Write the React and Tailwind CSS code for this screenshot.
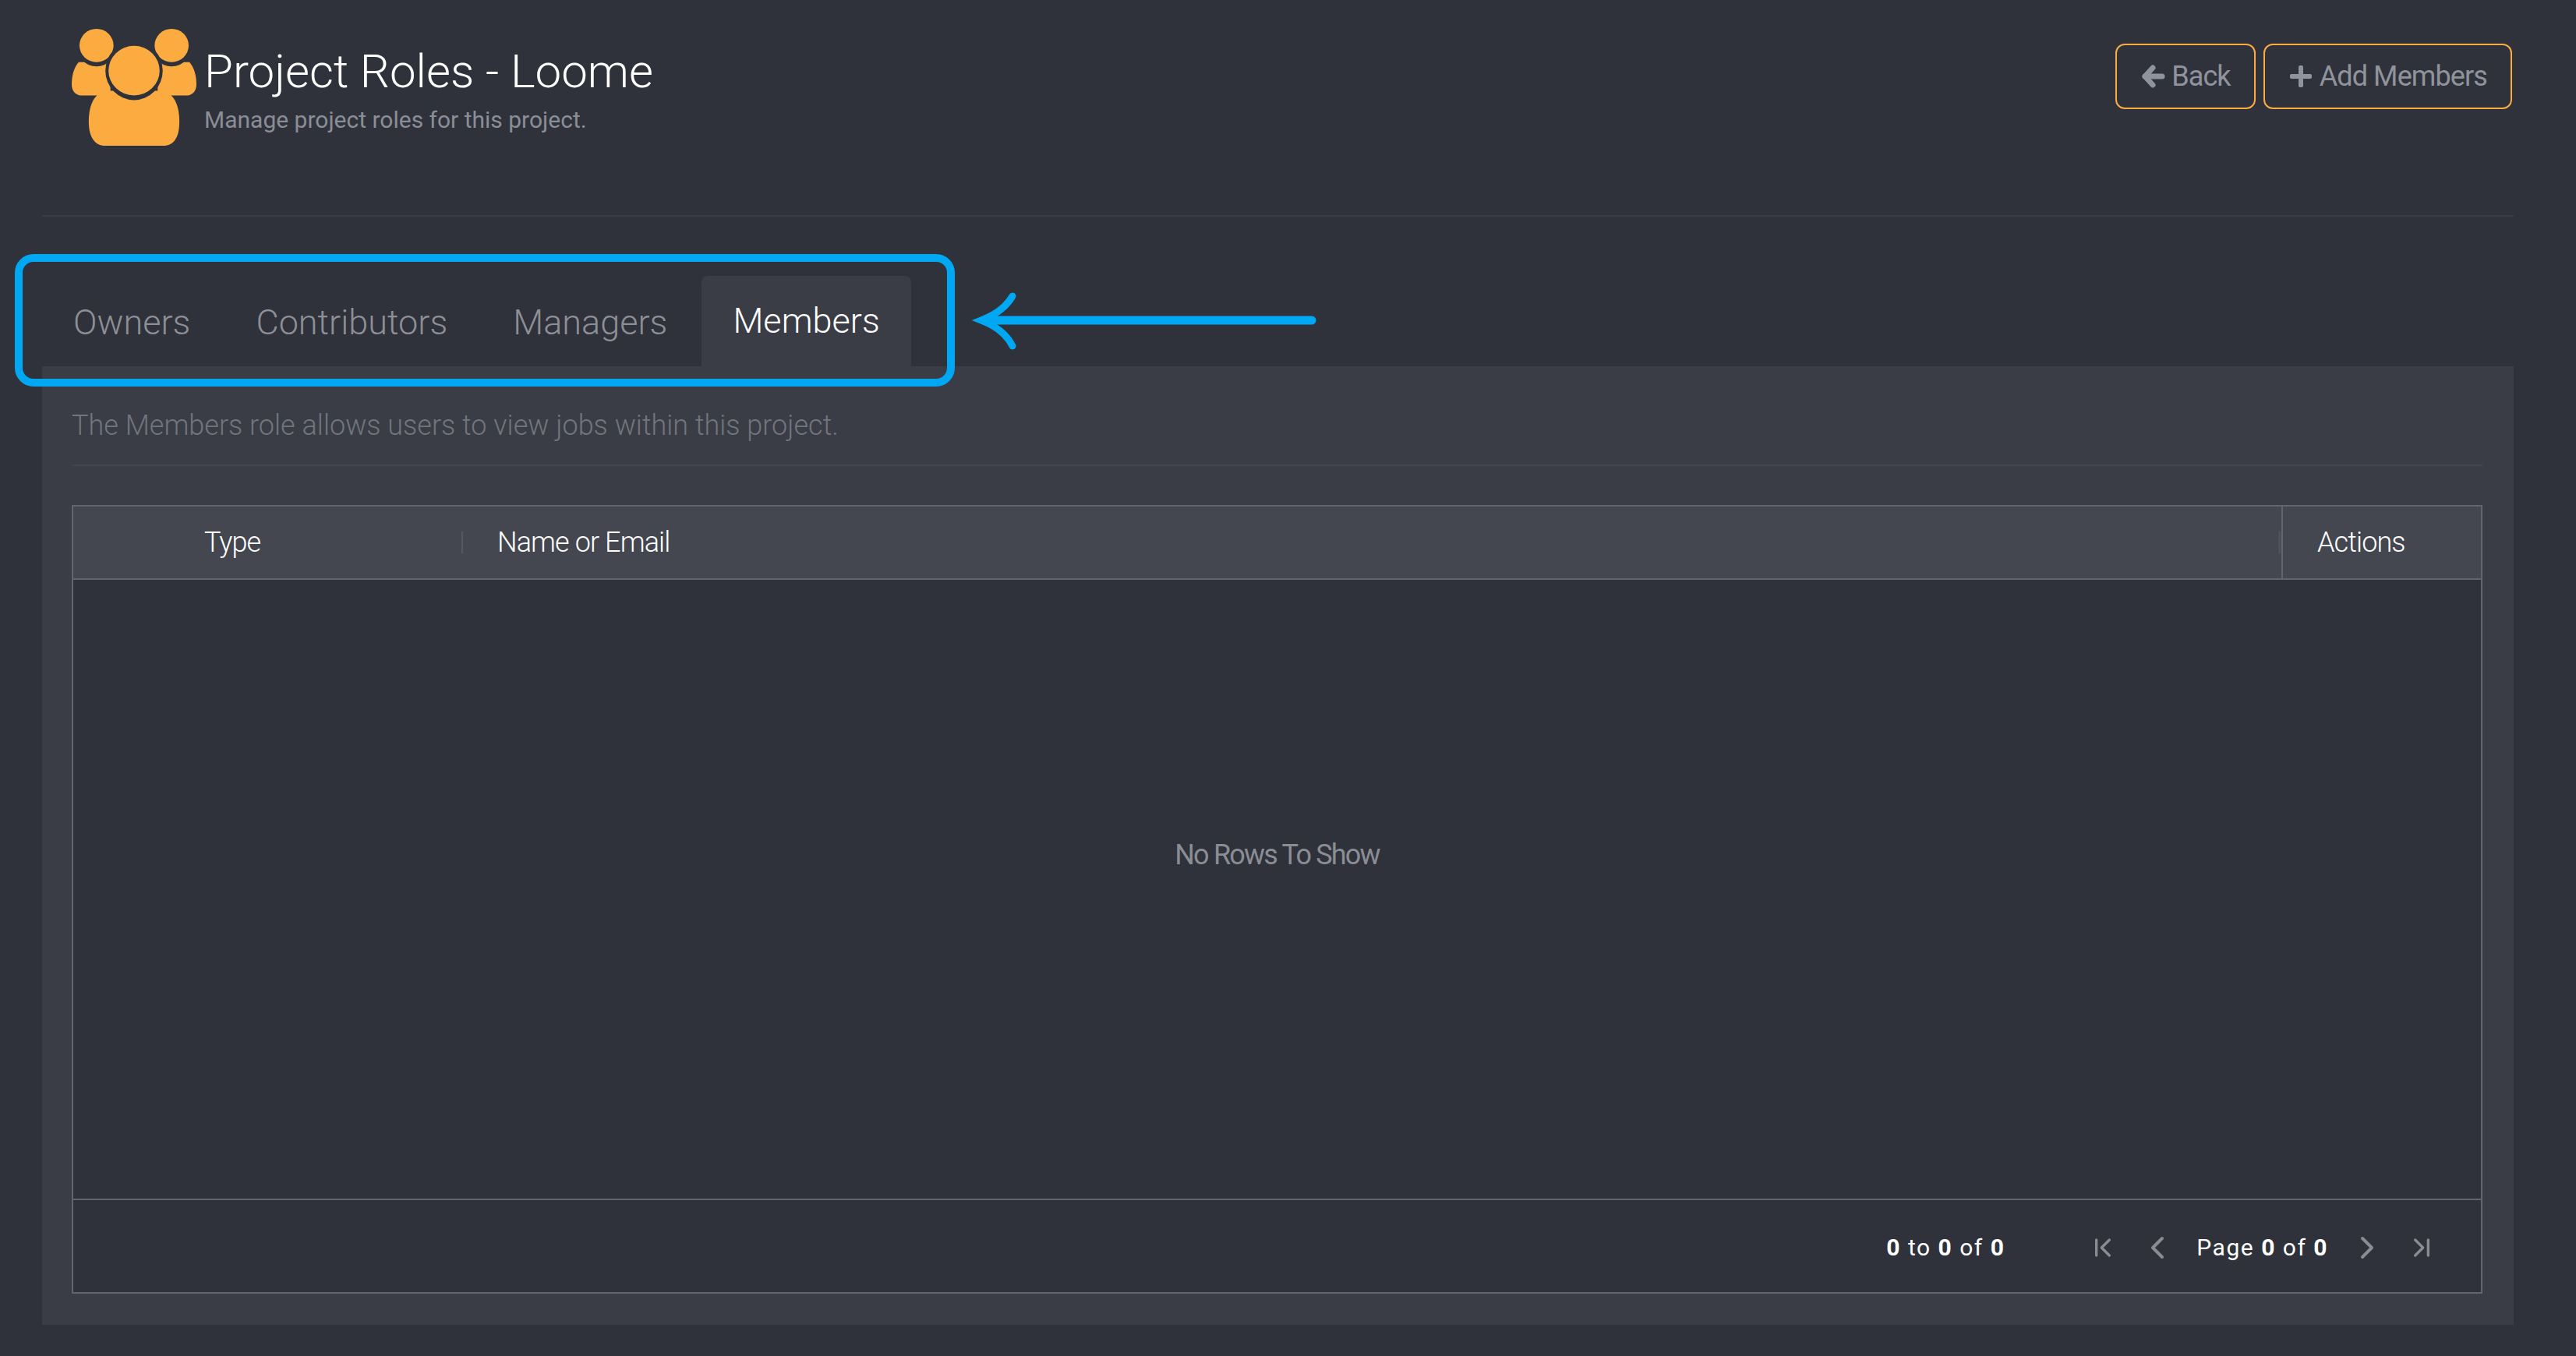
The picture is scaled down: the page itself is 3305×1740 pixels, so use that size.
import { FaPlus } from 'react-icons/fa';
import { ChevronFirst, ChevronLast, ChevronLeft, ChevronRight } from 'lucide-react';

const Logo = () => (
    <svg viewBox="0 0 161 151" className="w-40 h-38 shrink-0">
        {/* side bodies */}
        <path d="M9 43C3 50 0 60 0 72C0 80 5 86 12 86L50 86L50 43Z" fill="#fbab40" />
        <path d="M152 43C158 50 161 60 161 72C161 80 156 86 149 86L111 86L111 43Z" fill="#fbab40" />
        {/* side heads */}
        <ellipse cx="32" cy="21.5" rx="26" ry="27" fill="#2f323b" />
        <ellipse cx="129" cy="21.5" rx="26" ry="27" fill="#2f323b" />
        <ellipse cx="32" cy="21.5" rx="22" ry="21.5" fill="#fbab40" />
        <ellipse cx="129" cy="21.5" rx="22" ry="21.5" fill="#fbab40" />
        {/* centre person */}
        <ellipse cx="80.5" cy="120" rx="62" ry="44" fill="#2f323b" />
        <path d="M22 120C22 100 28 85 42 80L119 80C133 85 139 100 139 120C139 140 132 151 118 151L43 151C30 151 22 140 22 120Z" fill="#fbab40" />
        <ellipse cx="80.5" cy="54" rx="37" ry="38" fill="#2f323b" />
        <ellipse cx="80.5" cy="54" rx="33" ry="32" fill="#fbab40" />
    </svg>
);

const BackArrow = () => (
    <svg viewBox="0 0 32 32" className="w-8 h-8" fill="none" stroke="currentColor" strokeWidth="7" strokeLinecap="round" strokeLinejoin="round">
        <path d="M6 16H28" />
        <path d="M16 5L6 16L16 27" />
    </svg>
);

const Arrow = () => (
    <svg viewBox="0 0 450 85" className="absolute left-[1245px] top-[370px] w-[450px] h-[85px]" fill="none" stroke="#00a8f3" strokeLinecap="round">
        <path d="M18 41L438 41" strokeWidth="11" />
        <path d="M54 10C46 24 32 34 14 41C32 48 46 58 54 74" strokeWidth="9" />
    </svg>
);

const Tab = ({ label, active }) => (
    <div className={active
        ? 'flex items-center px-10 -mt-1 rounded-t-lg bg-[#3a3d46] text-white'
        : 'flex items-center px-10 text-[#8d8f96]'}>
        {label}
    </div>
);

const App = () => {
    return (
        <div className="relative min-h-screen flex flex-col pl-13.5 pr-20 pb-10 bg-[#2f323b] font-['Roboto',sans-serif]">
            {/* header */}
            <div className="flex items-start justify-between pl-9.5 pt-9 pb-22 border-b-2 border-[#393b49]">
                <div className="flex items-start gap-2.5">
                    <Logo />
                    <div className="mt-6.5">
                        <h1 className="text-6xl font-light text-white">Project Roles - Loome</h1>
                        <p className="mt-3.5 text-3xl text-[#8a8e96]">Manage project roles for this project.</p>
                    </div>
                </div>
                <div className="flex gap-2.5 mt-5 mr-0.5">
                    <button className="flex items-center gap-2 px-7.5 py-5 rounded-xl border-2 border-[#fbab40] text-4xl tracking-tight leading-10 text-[#8f949c]">
                        <BackArrow />
                        Back
                    </button>
                    <button className="flex items-center gap-2 px-7.5 py-5 rounded-xl border-2 border-[#fbab40] text-4xl tracking-tight leading-10 text-[#8f949c]">
                        <FaPlus className="w-8 h-8" />
                        Add Members
                    </button>
                </div>
            </div>

            {/* tabs */}
            <div className="flex gap-1 h-28 mt-20 text-[45px] font-light">
                <Tab label="Owners" />
                <Tab label="Contributors" />
                <Tab label="Managers" />
                <Tab label="Members" active />
            </div>

            {/* panel */}
            <div className="flex-1 flex flex-col pl-9.5 pr-10 pt-14 pb-10 bg-[#3a3d46]">
                <p className="pb-7.5 border-b-2 border-[#42444e] text-4xl font-light text-[#72757d]">The Members role allows users to view jobs within this project.</p>

                <div className="flex-1 flex flex-col mt-12.5 border-2 border-[#63646c] bg-[#2f323b]">
                    <div className="flex text-4xl font-light tracking-tight leading-9 text-white bg-[#44474f] border-b-2 border-[#63646c]">
                        <div className="flex items-center justify-between w-125 pl-42 py-7">
                            <span>Type</span>
                            <div className="w-0.5 h-7 bg-[#565963]" />
                        </div>
                        <div className="flex-1 flex items-center justify-between pl-11">
                            <span>Name or Email</span>
                            <div className="w-1 h-7 bg-[#4d505a]" />
                        </div>
                        <div className="flex items-center w-64 pl-11 border-l-2 border-[#63646c]">Actions</div>
                    </div>

                    <div className="flex-1 flex items-center justify-center pb-22 text-4xl tracking-tighter text-[#8a8d94]">
                        No Rows To Show
                    </div>

                    <div className="flex items-center justify-end gap-6.5 h-30 pt-1 pr-14 border-t-2 border-[#63646c] text-3xl tracking-wider text-white">
                        <span className="mr-20">
                            <b>0</b> to <b>0</b> of <b>0</b>
                        </span>
                        <ChevronFirst className="w-10 h-10 text-[#8a8c92]" />
                        <ChevronLeft className="w-12 h-12 text-[#8a8c92]" />
                        <span>
                            Page <b>0</b> of <b>0</b>
                        </span>
                        <ChevronRight className="w-12 h-12 text-[#8a8c92]" />
                        <ChevronLast className="w-10 h-10 text-[#8a8c92]" />
                    </div>
                </div>
            </div>

            {/* annotation over the tabs */}
            <div className="absolute left-[19px] top-[326px] w-[1206px] h-[170px] rounded-3xl border-[10px] border-[#00a8f3]" />
            <Arrow />
        </div>
    );
};

export default App;
